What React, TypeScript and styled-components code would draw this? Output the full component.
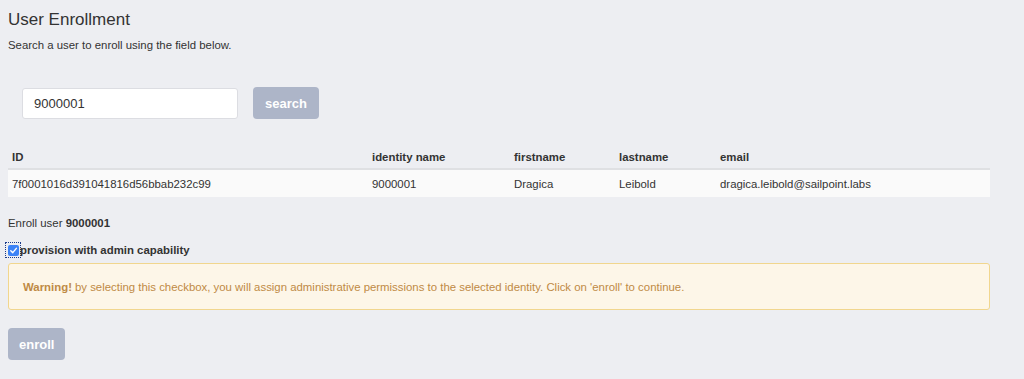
import { createGlobalStyle } from "styled-components";
import styled from "styled-components";

const GlobalStyle = createGlobalStyle`
  body {
    margin: 0;
    background: #edeef2;
    font-family: "Liberation Sans", Arial, sans-serif;
    color: #333;
  }
`;

const Page = styled.div`
  padding: 9px 8px 18px 8px;
  width: 982px;
`;

const Title = styled.h2`
  margin: 0;
  font-size: 17px;
  font-weight: normal;
  line-height: 22px;
  color: #333;
`;

const Lead = styled.p`
  margin: 7px 0 0 0;
  font-size: 11.4px;
  line-height: 14px;
`;

const SearchRow = styled.div`
  display: flex;
  align-items: center;
  gap: 15px;
  margin: 35px 0 0 14px;
`;

const SearchInput = styled.input`
  box-sizing: border-box;
  width: 216px;
  height: 31px;
  padding: 0 11px;
  border: 1px solid #dcdde2;
  border-radius: 3px;
  background: #fff;
  font-family: inherit;
  font-size: 13px;
  color: #333;
  outline: none;
`;

const Button = styled.button`
  box-sizing: border-box;
  height: 32px;
  padding: 0 12px;
  border: none;
  border-radius: 4px;
  background: #adb5c8;
  color: #fff;
  font-family: inherit;
  font-size: 13px;
  font-weight: bold;
`;

const Table = styled.table`
  width: 982px;
  margin-top: 26px;
  border-collapse: collapse;
  table-layout: fixed;
  font-size: 11.4px;
`;

const Th = styled.th<{ $w: number }>`
  box-sizing: border-box;
  width: ${(p) => p.$w}px;
  text-align: left;
  padding: 0 4px;
  height: 24px;
  font-weight: bold;
  border-bottom: 2px solid #dfe0e3;
`;

const Td = styled.td`
  padding: 0 4px;
  height: 27px;
  background: #fafafa;
`;

const EnrollLine = styled.div`
  margin-top: 19px;
  font-size: 11.4px;
  line-height: 14px;
`;

const CheckRow = styled.label`
  display: flex;
  align-items: center;
  margin: 13px 0 0 -2px;
  font-size: 11.4px;
  font-weight: bold;
  line-height: 14px;
`;

const Check = styled.span`
  box-sizing: border-box;
  display: flex;
  align-items: center;
  justify-content: center;
  width: 14px;
  height: 14px;
  outline: 1px dotted #1a3a8a;
  padding: 1px;

  span {
    display: flex;
    align-items: center;
    justify-content: center;
    width: 11px;
    height: 11px;
    border-radius: 2px;
    background: #3b82f6;
  }
`;

const Warning = styled.div`
  box-sizing: border-box;
  margin-top: 6px;
  height: 47px;
  display: flex;
  align-items: center;
  padding: 0 14px;
  background: #fdf6e8;
  border: 1px solid #f1d68e;
  border-radius: 3px;
  color: #bf8a45;
  font-size: 11.4px;

  b {
    margin-right: 3px;
  }
`;

const EnrollButton = styled(Button)`
  margin-top: 18px;
  padding: 0 11px;
`;

const columns = [
  { label: "ID", w: 360 },
  { label: "identity name", w: 142 },
  { label: "firstname", w: 105 },
  { label: "lastname", w: 101 },
  { label: "email", w: 274 },
];

const row = [
  "7f0001016d391041816d56bbab232c99",
  "9000001",
  "Dragica",
  "Leibold",
  "dragica.leibold@sailpoint.labs",
];

export default function App() {
  return (
    <>
      <GlobalStyle />
      <Page>
        <Title>User Enrollment</Title>
        <Lead>Search a user to enroll using the field below.</Lead>
        <SearchRow>
          <SearchInput defaultValue="9000001" />
          <Button>search</Button>
        </SearchRow>
        <Table>
          <thead>
            <tr>
              {columns.map((c) => (
                <Th key={c.label} $w={c.w}>
                  {c.label}
                </Th>
              ))}
            </tr>
          </thead>
          <tbody>
            <tr>
              {row.map((v, i) => (
                <Td key={i}>{v}</Td>
              ))}
            </tr>
          </tbody>
        </Table>
        <EnrollLine>
          Enroll user <b>9000001</b>
        </EnrollLine>
        <CheckRow>
          <Check>
            <span>
              <svg width="9" height="9" viewBox="0 0 10 10">
                <path d="M2 5.2 L4.2 7.4 L8.2 2.6" fill="none" stroke="#fff" strokeWidth="1.6" strokeLinecap="round" strokeLinejoin="round" />
              </svg>
            </span>
          </Check>
          provision with admin capability
        </CheckRow>
        <Warning>
          <b>Warning!</b> by selecting this checkbox, you will assign administrative permissions to the selected identity. Click on 'enroll' to continue.
        </Warning>
        <EnrollButton>enroll</EnrollButton>
      </Page>
    </>
  );
}
